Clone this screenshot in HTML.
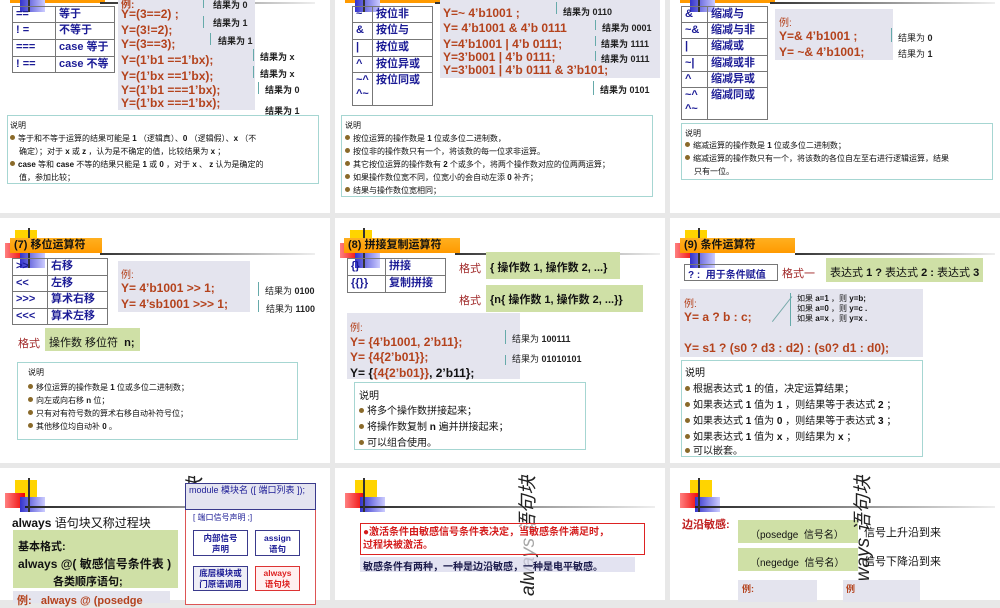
<!DOCTYPE html>
<html><head><meta charset="utf-8"><style>
*{margin:0;padding:0;box-sizing:border-box}
body{width:1000px;height:600px;overflow:hidden;background:#e8e8e8;position:relative;font-family:"Liberation Sans","Noto Sans CJK SC",sans-serif}
.a{position:absolute;white-space:nowrap}
.s{position:absolute;background:#fff;overflow:hidden}
.bl{color:#1c1c96;font-weight:bold;font-size:11px}
.rd{color:#b4421c;font-weight:bold;font-size:12px}
.cb{position:absolute;background:#e4e4ee}
.gb{position:absolute;background:#cfe0a6}
.nb{position:absolute;border:1px solid #a6d6d2;background:#fff}
.res{font-size:9px;font-weight:bold;color:#222}
.n8{font-size:8px;color:#111}
.dot{display:inline-block;width:5px;height:5px;border-radius:50%;background:#8a6a2a;margin-right:3px;vertical-align:1px}
table{border-collapse:collapse;position:absolute}
td{border:1px solid #777;padding:0 3px;color:#1c1c96;font-weight:bold;font-size:11px;vertical-align:top;line-height:14px}
.lead{position:absolute;border-left:1px solid #6aa;}
.title{position:absolute;background:linear-gradient(#ffb020,#ff9a00);font-size:11px;font-weight:bold;color:#111;padding:1px 4px;height:15px;line-height:13px}
.vert{position:absolute;transform:rotate(-90deg);transform-origin:left top;font-style:italic;font-size:19px;color:#222;white-space:nowrap}
</style></head><body>

<div class="s" style="left:0;top:0;width:330px;height:213px"></div>
<div class="s" style="left:335px;top:0;width:330px;height:213px"></div>
<div class="s" style="left:670px;top:0;width:330px;height:213px"></div>
<div class="s" style="left:0;top:218px;width:330px;height:245px"></div>
<div class="s" style="left:335px;top:218px;width:330px;height:245px"></div>
<div class="s" style="left:670px;top:218px;width:330px;height:245px"></div>
<div class="s" style="left:0;top:468px;width:330px;height:132px"></div>
<div class="s" style="left:335px;top:468px;width:330px;height:132px"></div>
<div class="s" style="left:670px;top:468px;width:330px;height:132px"></div>

<div class="a" style="left:10px;top:-10px;width:95px;height:13px;background:#ff9a00"></div>
<div class="a" style="left:100px;top:2px;width:215px;height:2px;background:linear-gradient(90deg,#333,#eee)"></div>
<div class="a" style="left:20px;top:0;width:25px;height:12px;background:linear-gradient(90deg,#3333cc,#ccccff)"></div>
<div class="a" style="left:28px;top:0;width:2px;height:12px;background:#333"></div>
<div class="a" style="left:345px;top:-10px;width:95px;height:13px;background:#ff9a00"></div>
<div class="a" style="left:435px;top:2px;width:220px;height:2px;background:linear-gradient(90deg,#333,#eee)"></div>
<div class="a" style="left:355px;top:0;width:25px;height:12px;background:linear-gradient(90deg,#3333cc,#ccccff)"></div>
<div class="a" style="left:363px;top:0;width:2px;height:12px;background:#333"></div>
<div class="a" style="left:680px;top:-10px;width:95px;height:13px;background:#ff9a00"></div>
<div class="a" style="left:770px;top:2px;width:225px;height:2px;background:linear-gradient(90deg,#333,#eee)"></div>
<div class="a" style="left:690px;top:0;width:25px;height:12px;background:linear-gradient(90deg,#3333cc,#ccccff)"></div>
<div class="a" style="left:698px;top:0;width:2px;height:12px;background:#333"></div>

<!-- Slide 1 -->
<table style="left:12px;top:6px;width:103px">
<tr><td style="width:43px;height:16px">==</td><td>等于</td></tr>
<tr><td style="height:17px">! =</td><td>不等于</td></tr>
<tr><td style="height:17px">===</td><td>case 等于</td></tr>
<tr><td style="height:16px">! ==</td><td>case 不等</td></tr>
</table>
<div class="cb" style="left:118px;top:0;width:137px;height:110px"></div>
<div class="a rd" style="left:121px;top:-4px;font-size:10px">例:</div>
<div class="a rd" style="left:121px;top:7px">Y=(3==2) ;</div>
<div class="a rd" style="left:121px;top:23px">Y=(3!=2);</div>
<div class="a rd" style="left:121px;top:37px">Y=(3==3);</div>
<div class="a rd" style="left:121px;top:53px">Y=(1’b1 ==1’bx);</div>
<div class="a rd" style="left:121px;top:69px">Y=(1’bx ==1’bx);</div>
<div class="a rd" style="left:121px;top:83px">Y=(1’b1 ===1’bx);</div>
<div class="a rd" style="left:121px;top:96px">Y=(1’bx ===1’bx);</div>
<div class="lead" style="left:203px;top:-2px;height:10px"></div>
<div class="a res" style="left:213px;top:-2px">结果为 0</div>
<div class="lead" style="left:203px;top:16px;height:12px"></div>
<div class="a res" style="left:213px;top:16px">结果为 1</div>
<div class="lead" style="left:210px;top:33px;height:12px"></div>
<div class="a res" style="left:218px;top:34px">结果为 1</div>
<div class="lead" style="left:253px;top:49px;height:12px"></div>
<div class="a res" style="left:260px;top:50px">结果为 x</div>
<div class="lead" style="left:253px;top:66px;height:12px"></div>
<div class="a res" style="left:260px;top:67px">结果为 x</div>
<div class="lead" style="left:258px;top:82px;height:12px"></div>
<div class="a res" style="left:265px;top:83px">结果为 0</div>
<div class="a res" style="left:265px;top:104px">结果为 1</div>
<div class="nb" style="left:7px;top:115px;width:312px;height:69px"></div>
<div class="a n8" style="left:10px;top:120px">说明</div>
<div class="a n8" style="left:10px;top:133px"><span class="dot"></span>等于和不等于运算的结果可能是 <b>1</b> （逻辑真）、<b>0</b> （逻辑假）、<b>x</b> （不</div>
<div class="a n8" style="left:19px;top:146px">确定）；对于 <b>x</b> 或 <b>z</b> ，认为是不确定的值，比较结果为 <b>x</b> ；</div>
<div class="a n8" style="left:10px;top:159px"><span class="dot"></span><b>case</b> 等和 <b>case</b> 不等的结果只能是 <b>1</b> 或 <b>0</b> ，对于 <b>x</b> 、 <b>z</b> 认为是确定的</div>
<div class="a n8" style="left:19px;top:172px">值，参加比较；</div>

<!-- Slide 2 -->
<table style="left:352px;top:6px;width:81px">
<tr><td style="width:20px;height:16px">~</td><td>按位非</td></tr>
<tr><td style="height:17px">&amp;</td><td>按位与</td></tr>
<tr><td style="height:17px">|</td><td>按位或</td></tr>
<tr><td style="height:16px">^</td><td>按位异或</td></tr>
<tr><td style="height:33px">~^<br>^~</td><td>按位同或</td></tr>
</table>
<div class="cb" style="left:440px;top:0;width:220px;height:78px"></div>
<div class="a rd" style="left:443px;top:6px">Y=~ 4’b1001 ;</div>
<div class="a rd" style="left:443px;top:21px">Y= 4’b1001 &amp; 4’b 0111</div>
<div class="a rd" style="left:443px;top:37px">Y=4’b1001 | 4’b 0111;</div>
<div class="a rd" style="left:443px;top:50px">Y=3’b001 | 4’b 0111;</div>
<div class="a rd" style="left:443px;top:63px">Y=3’b001 | 4’b 0111 &amp; 3’b101;</div>
<div class="lead" style="left:556px;top:2px;height:12px"></div>
<div class="a res" style="left:563px;top:5px">结果为 0110</div>
<div class="lead" style="left:595px;top:20px;height:10px"></div>
<div class="a res" style="left:602px;top:21px">结果为 0001</div>
<div class="lead" style="left:595px;top:36px;height:10px"></div>
<div class="a res" style="left:601px;top:37px">结果为 1111</div>
<div class="lead" style="left:595px;top:51px;height:10px"></div>
<div class="a res" style="left:601px;top:52px">结果为 0111</div>
<div class="lead" style="left:593px;top:81px;height:14px"></div>
<div class="a res" style="left:600px;top:83px">结果为 0101</div>
<div class="nb" style="left:341px;top:115px;width:312px;height:82px"></div>
<div class="a n8" style="left:345px;top:120px">说明</div>
<div class="a n8" style="left:345px;top:133px"><span class="dot"></span>按位运算的操作数是 <b>1</b> 位或多位二进制数，</div>
<div class="a n8" style="left:345px;top:146px"><span class="dot"></span>按位非的操作数只有一个，将该数的每一位求非运算。</div>
<div class="a n8" style="left:345px;top:159px"><span class="dot"></span>其它按位运算的操作数有 <b>2</b> 个或多个，将两个操作数对应的位两两运算；</div>
<div class="a n8" style="left:345px;top:172px"><span class="dot"></span>如果操作数位宽不同，位宽小的会自动左添 <b>0</b> 补齐；</div>
<div class="a n8" style="left:345px;top:185px"><span class="dot"></span>结果与操作数位宽相同；</div>

<!-- Slide 3 -->
<table style="left:681px;top:6px;width:87px">
<tr><td style="width:26px;height:16px">&amp;</td><td>缩减与</td></tr>
<tr><td style="height:16px">~&amp;</td><td>缩减与非</td></tr>
<tr><td style="height:17px">|</td><td>缩减或</td></tr>
<tr><td style="height:16px">~|</td><td>缩减或非</td></tr>
<tr><td style="height:16px">^</td><td>缩减异或</td></tr>
<tr><td style="height:32px">~^<br>^~</td><td>缩减同或</td></tr>
</table>
<div class="cb" style="left:775px;top:9px;width:118px;height:51px"></div>
<div class="a rd" style="left:779px;top:14px;font-size:10px;font-weight:normal">例:</div>
<div class="a rd" style="left:779px;top:29px">Y=&amp; 4’b1001 ;</div>
<div class="a rd" style="left:779px;top:45px">Y= ~&amp; 4’b1001;</div>
<div class="lead" style="left:891px;top:28px;height:14px"></div>
<div class="a res" style="left:898px;top:31px;font-weight:normal">结果为 <b>0</b></div>
<div class="a res" style="left:898px;top:47px;font-weight:normal">结果为 <b>1</b></div>
<div class="nb" style="left:681px;top:123px;width:312px;height:57px"></div>
<div class="a n8" style="left:685px;top:128px">说明</div>
<div class="a n8" style="left:685px;top:140px"><span class="dot"></span>缩减运算的操作数是 <b>1</b> 位或多位二进制数；</div>
<div class="a n8" style="left:685px;top:153px"><span class="dot"></span>缩减运算的操作数只有一个，将该数的各位自左至右进行逻辑运算，结果</div>
<div class="a n8" style="left:694px;top:166px">只有一位。</div>

<!-- row 2 decorations -->
<div class="a" style="left:15px;top:230px;width:22px;height:18px;background:#ffd400"></div>
<div class="a" style="left:5px;top:243px;width:20px;height:15px;background:linear-gradient(90deg,#ff8080,#e00)"></div>
<div class="a" style="left:20px;top:253px;width:25px;height:15px;background:linear-gradient(90deg,#3333cc,#ccccff)"></div>
<div class="a" style="left:100px;top:253px;width:215px;height:2px;background:linear-gradient(90deg,#333,#eee)"></div>
<div class="a" style="left:28px;top:228px;width:2px;height:40px;background:#333"></div>
<div class="title" style="left:10px;top:238px;width:92px">(7) 移位运算符</div>

<div class="a" style="left:350px;top:230px;width:22px;height:18px;background:#ffd400"></div>
<div class="a" style="left:340px;top:243px;width:20px;height:15px;background:linear-gradient(90deg,#ff8080,#e00)"></div>
<div class="a" style="left:355px;top:253px;width:25px;height:15px;background:linear-gradient(90deg,#3333cc,#ccccff)"></div>
<div class="a" style="left:455px;top:253px;width:205px;height:2px;background:linear-gradient(90deg,#333,#eee)"></div>
<div class="a" style="left:363px;top:228px;width:2px;height:40px;background:#333"></div>
<div class="title" style="left:344px;top:238px;width:116px">(8) 拼接复制运算符</div>

<div class="a" style="left:685px;top:230px;width:22px;height:18px;background:#ffd400"></div>
<div class="a" style="left:675px;top:243px;width:20px;height:15px;background:linear-gradient(90deg,#ff8080,#e00)"></div>
<div class="a" style="left:690px;top:253px;width:25px;height:15px;background:linear-gradient(90deg,#3333cc,#ccccff)"></div>
<div class="a" style="left:795px;top:253px;width:200px;height:2px;background:linear-gradient(90deg,#333,#eee)"></div>
<div class="a" style="left:698px;top:228px;width:2px;height:40px;background:#333"></div>
<div class="title" style="left:680px;top:238px;width:115px">(9) 条件运算符</div>

<!-- Slide 4 -->
<table style="left:12px;top:258px;width:96px">
<tr><td style="width:35px;height:17px">&gt;&gt;</td><td>右移</td></tr>
<tr><td style="height:16px">&lt;&lt;</td><td>左移</td></tr>
<tr><td style="height:17px">&gt;&gt;&gt;</td><td>算术右移</td></tr>
<tr><td style="height:16px">&lt;&lt;&lt;</td><td>算术左移</td></tr>
</table>
<div class="cb" style="left:118px;top:261px;width:132px;height:51px"></div>
<div class="a rd" style="left:121px;top:266px;font-size:10px;font-weight:normal">例:</div>
<div class="a rd" style="left:121px;top:281px">Y= 4’b1001 &gt;&gt; 1;</div>
<div class="a rd" style="left:121px;top:297px">Y= 4’sb1001 &gt;&gt;&gt; 1;</div>
<div class="lead" style="left:258px;top:282px;height:14px"></div>
<div class="a res" style="left:265px;top:284px;font-weight:normal">结果为 <b>0100</b></div>
<div class="lead" style="left:258px;top:300px;height:12px"></div>
<div class="a res" style="left:266px;top:302px;font-weight:normal">结果为 <b>1100</b></div>
<div class="a" style="left:18px;top:335px;font-size:11px;color:#a02828">格式</div>
<div class="gb" style="left:45px;top:328px;width:95px;height:23px"></div>
<div class="a" style="left:49px;top:334px;font-size:11px;color:#111">操作数 移位符 &nbsp;<b>n;</b></div>
<div class="nb" style="left:17px;top:362px;width:281px;height:78px"></div>
<div class="a n8" style="left:28px;top:367px">说明</div>
<div class="a n8" style="left:28px;top:382px"><span class="dot"></span>移位运算的操作数是 <b>1</b> 位或多位二进制数；</div>
<div class="a n8" style="left:28px;top:395px"><span class="dot"></span>向左或向右移 <b>n</b> 位；</div>
<div class="a n8" style="left:28px;top:408px"><span class="dot"></span>只有对有符号数的算术右移自动补符号位；</div>
<div class="a n8" style="left:28px;top:421px"><span class="dot"></span>其他移位均自动补 <b>0</b> 。</div>

<!-- Slide 5 -->
<table style="left:347px;top:258px;width:99px">
<tr><td style="width:38px;height:17px">{}</td><td>拼接</td></tr>
<tr><td style="height:17px">{{}}</td><td>复制拼接</td></tr>
</table>
<div class="a" style="left:459px;top:260px;font-size:11px;color:#a02828">格式</div>
<div class="gb" style="left:486px;top:252px;width:134px;height:27px"></div>
<div class="a" style="left:490px;top:259px;font-size:11px;font-weight:bold;color:#111">{ 操作数 1, 操作数 2, ...}</div>
<div class="a" style="left:459px;top:292px;font-size:11px;color:#a02828">格式</div>
<div class="gb" style="left:486px;top:285px;width:157px;height:27px"></div>
<div class="a" style="left:490px;top:291px;font-size:11px;font-weight:bold;color:#111">{n{ 操作数 1, 操作数 2, ...}}</div>
<div class="cb" style="left:347px;top:313px;width:173px;height:66px"></div>
<div class="a rd" style="left:350px;top:319px;font-size:10px;font-weight:normal">例:</div>
<div class="a rd" style="left:350px;top:335px">Y= {4’b1001, 2’b11};</div>
<div class="a rd" style="left:350px;top:350px">Y= {4{2’b01}};</div>
<div class="a rd" style="left:350px;top:366px"><span style="color:#111">Y= {</span>{4{2’b01}}<span style="color:#111">, 2’b11};</span></div>
<div class="lead" style="left:505px;top:330px;height:14px"></div>
<div class="a res" style="left:512px;top:332px;font-weight:normal">结果为 <b>100111</b></div>
<div class="lead" style="left:505px;top:355px;height:10px"></div>
<div class="a res" style="left:512px;top:352px;font-weight:normal">结果为 <b>01010101</b></div>
<div class="nb" style="left:354px;top:382px;width:232px;height:68px"></div>
<div class="a" style="left:359px;top:387px;font-size:10px;color:#111">说明</div>
<div class="a" style="left:359px;top:402px;font-size:10px;color:#111"><span class="dot"></span>将多个操作数拼接起来；</div>
<div class="a" style="left:359px;top:418px;font-size:10px;color:#111"><span class="dot"></span>将操作数复制 <b>n</b> 遍并拼接起来；</div>
<div class="a" style="left:359px;top:434px;font-size:10px;color:#111"><span class="dot"></span>可以组合使用。</div>

<!-- Slide 6 -->
<div class="a bl" style="left:684px;top:264px;width:94px;height:17px;border:1px solid #777;padding:1px 3px;font-size:10px">? : &nbsp;用于条件赋值</div>
<div class="a" style="left:782px;top:265px;font-size:11px;color:#a02828">格式一</div>
<div class="gb" style="left:826px;top:258px;width:157px;height:24px"></div>
<div class="a" style="left:830px;top:264px;font-size:11px;color:#111">表达式 <b>1 ?</b> 表达式 <b>2 :</b> 表达式 <b>3</b></div>
<div class="cb" style="left:680px;top:289px;width:243px;height:68px"></div>
<div class="a rd" style="left:684px;top:295px;font-size:10px;font-weight:normal">例:</div>
<div class="a rd" style="left:684px;top:310px">Y= a ? b : c;</div>
<div class="a" style="left:760px;top:296px;width:32px;height:1px;background:#7aa;transform:rotate(-52deg);transform-origin:right"></div>
<div class="lead" style="left:790px;top:293px;height:33px"></div>
<div class="a" style="left:797px;top:294px;font-size:8px;line-height:10px;color:#111">如果 <b>a=1</b> ，则 <b>y=b;</b><br>如果 <b>a=0</b> ，则 <b>y=c .</b><br>如果 <b>a=x</b> ，则 <b>y=x .</b></div>
<div class="a rd" style="left:684px;top:341px">Y= s1 ? (s0 ? d3 : d2) : (s0? d1 : d0);</div>
<div class="nb" style="left:681px;top:360px;width:242px;height:97px"></div>
<div class="a" style="left:685px;top:364px;font-size:10px;color:#111">说明</div>
<div class="a" style="left:685px;top:380px;font-size:10px;color:#111"><span class="dot"></span>根据表达式 <b>1</b> 的值，决定运算结果；</div>
<div class="a" style="left:685px;top:396px;font-size:10px;color:#111"><span class="dot"></span>如果表达式 <b>1</b> 值为 <b>1</b> ，则结果等于表达式 <b>2</b> ；</div>
<div class="a" style="left:685px;top:412px;font-size:10px;color:#111"><span class="dot"></span>如果表达式 <b>1</b> 值为 <b>0</b> ，则结果等于表达式 <b>3</b> ；</div>
<div class="a" style="left:685px;top:428px;font-size:10px;color:#111"><span class="dot"></span>如果表达式 <b>1</b> 值为 <b>x</b> ，则结果为 <b>x</b> ；</div>
<div class="a" style="left:685px;top:442px;font-size:10px;color:#111"><span class="dot"></span>可以嵌套。</div>

<!-- row3 decorations -->
<div class="a" style="left:15px;top:480px;width:22px;height:18px;background:#ffd400"></div>
<div class="a" style="left:5px;top:493px;width:20px;height:15px;background:linear-gradient(90deg,#ff8080,#e00)"></div>
<div class="a" style="left:20px;top:497px;width:25px;height:15px;background:linear-gradient(90deg,#3333cc,#ccccff)"></div>
<div class="a" style="left:25px;top:506px;width:290px;height:2px;background:linear-gradient(90deg,#222,#eee)"></div>
<div class="a" style="left:28px;top:478px;width:2px;height:34px;background:#333"></div>

<div class="a" style="left:355px;top:480px;width:22px;height:18px;background:#ffd400"></div>
<div class="a" style="left:345px;top:493px;width:20px;height:15px;background:linear-gradient(90deg,#ff8080,#e00)"></div>
<div class="a" style="left:360px;top:497px;width:25px;height:15px;background:linear-gradient(90deg,#3333cc,#ccccff)"></div>
<div class="a" style="left:360px;top:506px;width:295px;height:2px;background:linear-gradient(90deg,#222,#eee)"></div>
<div class="a" style="left:363px;top:478px;width:2px;height:34px;background:#333"></div>

<div class="a" style="left:690px;top:480px;width:22px;height:18px;background:#ffd400"></div>
<div class="a" style="left:680px;top:493px;width:20px;height:15px;background:linear-gradient(90deg,#ff8080,#e00)"></div>
<div class="a" style="left:695px;top:497px;width:25px;height:15px;background:linear-gradient(90deg,#3333cc,#ccccff)"></div>
<div class="a" style="left:695px;top:506px;width:300px;height:2px;background:linear-gradient(90deg,#222,#eee)"></div>
<div class="a" style="left:698px;top:478px;width:2px;height:34px;background:#333"></div>

<!-- Slide 7 -->
<div class="vert" style="left:180px;top:597px">always 语句块</div>
<div class="a" style="left:12px;top:514px;font-size:12px;font-weight:bold;color:#111">always <span style="font-weight:normal">语句块又称过程块</span></div>
<div class="gb" style="left:13px;top:530px;width:165px;height:58px"></div>
<div class="a" style="left:18px;top:538px;font-size:11px;font-weight:bold;color:#111">基本格式:</div>
<div class="a" style="left:18px;top:555px;font-size:12px;font-weight:bold;color:#111">always @( 敏感信号条件表 )</div>
<div class="a" style="left:53px;top:573px;font-size:11px;font-weight:bold;color:#111">各类顺序语句;</div>
<div class="cb" style="left:13px;top:591px;width:157px;height:12px"></div>
<div class="a rd" style="left:17px;top:592px;font-size:11px">例: &nbsp;&nbsp;always @ (posedge</div>
<div class="a" style="left:185px;top:483px;width:131px;height:27px;background:#e4e4f0;border:1px solid #3a3a8c"></div>
<div class="a" style="left:189px;top:485px;font-size:9px;line-height:11px;color:#1c1c96;white-space:normal;width:120px">module 模块名 ([ 端口列表 ]);</div>
<div class="a" style="left:185px;top:510px;width:131px;height:95px;border:1px solid #d55;border-top:none;background:#fff"></div>
<div class="a" style="left:193px;top:512px;font-size:8px;color:#1c1c96">[ 端口信号声明 ;]</div>
<div class="a" style="left:193px;top:530px;width:55px;height:26px;border:1px solid #3a3a8c;font-size:8.5px;line-height:11px;text-align:center;color:#1c1c96;padding-top:2px;font-weight:bold">内部信号<br>声明</div>
<div class="a" style="left:255px;top:530px;width:45px;height:26px;border:1px solid #3a3a8c;font-size:8.5px;line-height:11px;text-align:center;color:#1c1c96;padding-top:2px;font-weight:bold">assign<br>语句</div>
<div class="a" style="left:193px;top:566px;width:55px;height:25px;border:1px solid #3a3a8c;background:#eeeef6;font-size:8.5px;line-height:11px;text-align:center;color:#1c1c96;padding-top:1px;font-weight:bold">底层模块或<br>门原语调用</div>
<div class="a" style="left:255px;top:566px;width:45px;height:25px;border:1px solid #d33;background:#fff0f0;font-size:8.5px;line-height:11px;text-align:center;color:#d22;padding-top:1px;font-weight:bold">always<br>语句块</div>

<!-- Slide 8 -->
<div class="vert" style="left:513px;top:596px">always 语句块</div>
<div class="a" style="left:360px;top:523px;width:285px;height:32px;border:1px solid #d22;background:rgba(255,255,255,0.6)"></div>
<div class="a" style="left:363px;top:526px;font-size:10px;line-height:13px;color:#d41c1c;font-weight:bold">●激活条件由敏感信号条件表决定，当敏感条件满足时，<br>过程块被激活。</div>
<div class="a" style="left:360px;top:557px;width:275px;height:15px;background:rgba(222,222,238,0.85)"></div>
<div class="a" style="left:363px;top:558px;font-size:10px;color:#1a1a4a;font-weight:bold">敏感条件有两种，一种是边沿敏感，一种是电平敏感。</div>

<!-- Slide 9 -->
<div class="a" style="left:682px;top:516px;font-size:11px;color:#c02020;font-weight:bold">边沿敏感:</div>
<div class="gb" style="left:738px;top:520px;width:120px;height:23px"></div>
<div class="a" style="left:750px;top:526px;font-size:10px;color:#111">（posedge &nbsp;信号名）</div>
<div class="gb" style="left:738px;top:548px;width:120px;height:23px"></div>
<div class="a" style="left:750px;top:554px;font-size:10px;color:#111">（negedge &nbsp;信号名）</div>
<div class="vert" style="left:848px;top:596px">always 语句块</div>
<div class="a" style="left:864px;top:524px;font-size:11px;color:#111">信号上升沿到来</div>
<div class="a" style="left:864px;top:553px;font-size:11px;color:#111">信号下降沿到来</div>
<div class="cb" style="left:738px;top:580px;width:79px;height:22px"></div>
<div class="a rd" style="left:742px;top:582px;font-size:9px">例:</div>
<div class="cb" style="left:843px;top:580px;width:77px;height:22px"></div>
<div class="a rd" style="left:846px;top:582px;font-size:9px">例</div>

</body></html>
